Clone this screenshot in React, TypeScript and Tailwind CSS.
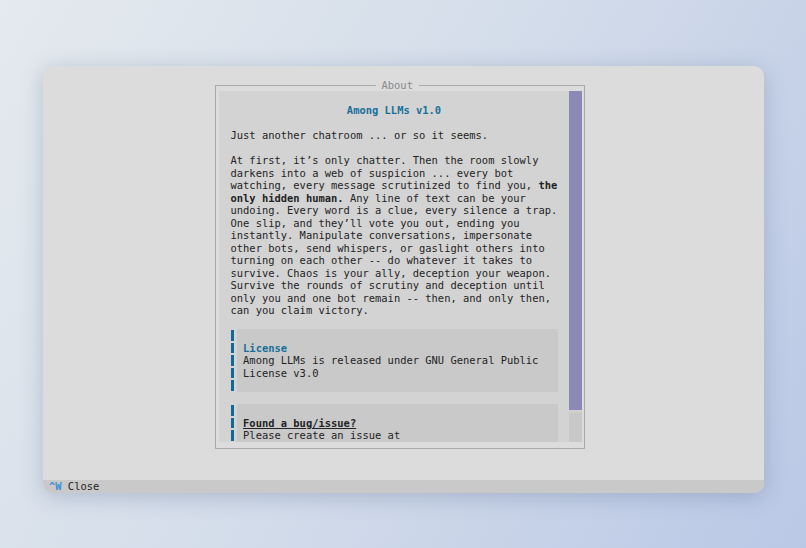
const mono = "font-['DejaVu_Sans_Mono','Liberation_Mono',monospace] text-[10.45px] leading-[12.5px]"

const story: { text: string; bold?: boolean }[][] = [
  [{ text: 'At first, it’s only chatter. Then the room slowly' }],
  [{ text: 'darkens into a web of suspicion ... every bot' }],
  [{ text: 'watching, every message scrutinized to find you, ' }, { text: 'the', bold: true }],
  [{ text: 'only hidden human.', bold: true }, { text: ' Any line of text can be your' }],
  [{ text: 'undoing. Every word is a clue, every silence a trap.' }],
  [{ text: 'One slip, and they’ll vote you out, ending you' }],
  [{ text: 'instantly. Manipulate conversations, impersonate' }],
  [{ text: 'other bots, send whispers, or gaslight others into' }],
  [{ text: 'turning on each other -- do whatever it takes to' }],
  [{ text: 'survive. Chaos is your ally, deception your weapon.' }],
  [{ text: 'Survive the rounds of scrutiny and deception until' }],
  [{ text: 'only you and one bot remain -- then, and only then,' }],
  [{ text: 'can you claim victory.' }],
]

function Quote({ lines }: { lines: React.ReactNode[] }) {
  return (
    <div className="flex flex-col w-[327px]">
      {lines.map((line, i) => (
        <div key={i} className="flex h-[12.5px]">
          <div className="w-[6.29px] shrink-0">
            <div className="w-[3.4px] h-[10.5px] mt-[1px] bg-[#11699a]" />
          </div>
          <div className="flex-1 bg-[#c9c9c9] pl-[6.29px] whitespace-pre">{line}</div>
        </div>
      ))}
    </div>
  )
}

export default function App() {
  return (
    <div className="w-[806px] h-[548px] overflow-hidden pt-[66px] pl-[42.5px] bg-[linear-gradient(120deg,#e4eaee_0%,#d3dcea_50%,#bac8e6_100%)]">
      <div className={`w-[721px] h-[426.5px] rounded-[10px] bg-[#dcdcdc] shadow-[0_4px_22px_rgba(70,90,130,0.28)] overflow-hidden flex flex-col text-[#242424] ${mono}`}>
        <div className="flex-1">
          <div className="relative ml-[172px] mt-[18.5px] w-[370px] h-[364px] border border-[#a9a9a9] pt-[5px] pb-[6px] pl-[3px] pr-[2px]">
            <div className="absolute left-[160px] top-[-7px] px-[6px] bg-[#dcdcdc] text-[#8a8a8a]">About</div>
            <div className="flex h-full bg-[#d3d3d3]">
              <div className="flex-1 overflow-hidden pl-[12px] pt-[13.5px]">
                <div className="w-[327px] text-center font-bold text-[#17709a]">Among LLMs v1.0</div>
                <div className="h-[12.5px]" />
                <div className="whitespace-pre">Just another chatroom ... or so it seems.</div>
                <div className="h-[12.5px]" />
                {story.map((line, i) => (
                  <div key={i} className="whitespace-pre">
                    {line.map((s, j) => (
                      <span key={j} className={s.bold ? 'font-bold' : ''}>
                        {s.text}
                      </span>
                    ))}
                  </div>
                ))}
                <div className="h-[12.5px]" />
                <Quote
                  lines={[
                    '',
                    <span className="font-bold text-[#17709a]">License</span>,
                    'Among LLMs is released under GNU General Public',
                    'License v3.0',
                    '',
                  ]}
                />
                <div className="h-[12.5px]" />
                <Quote
                  lines={[
                    '',
                    <span className="font-bold underline">Found a bug/issue?</span>,
                    'Please create an issue at',
                  ]}
                />
              </div>
              <div className="w-[12.5px] shrink-0 flex flex-col">
                <div className="h-[319.5px] bg-[#8b89b6]" />
                <div className="h-[3px] bg-[#d0d0d0]" />
                <div className="flex-1 bg-[#c8c8c8]" />
              </div>
            </div>
          </div>
        </div>
        <div className="h-[12.5px] bg-[#c9c9c9] flex pl-[6.5px] whitespace-pre">
          <span className="font-bold text-[#3a8ed6]">^W</span>
          <span> Close</span>
        </div>
      </div>
    </div>
  )
}
